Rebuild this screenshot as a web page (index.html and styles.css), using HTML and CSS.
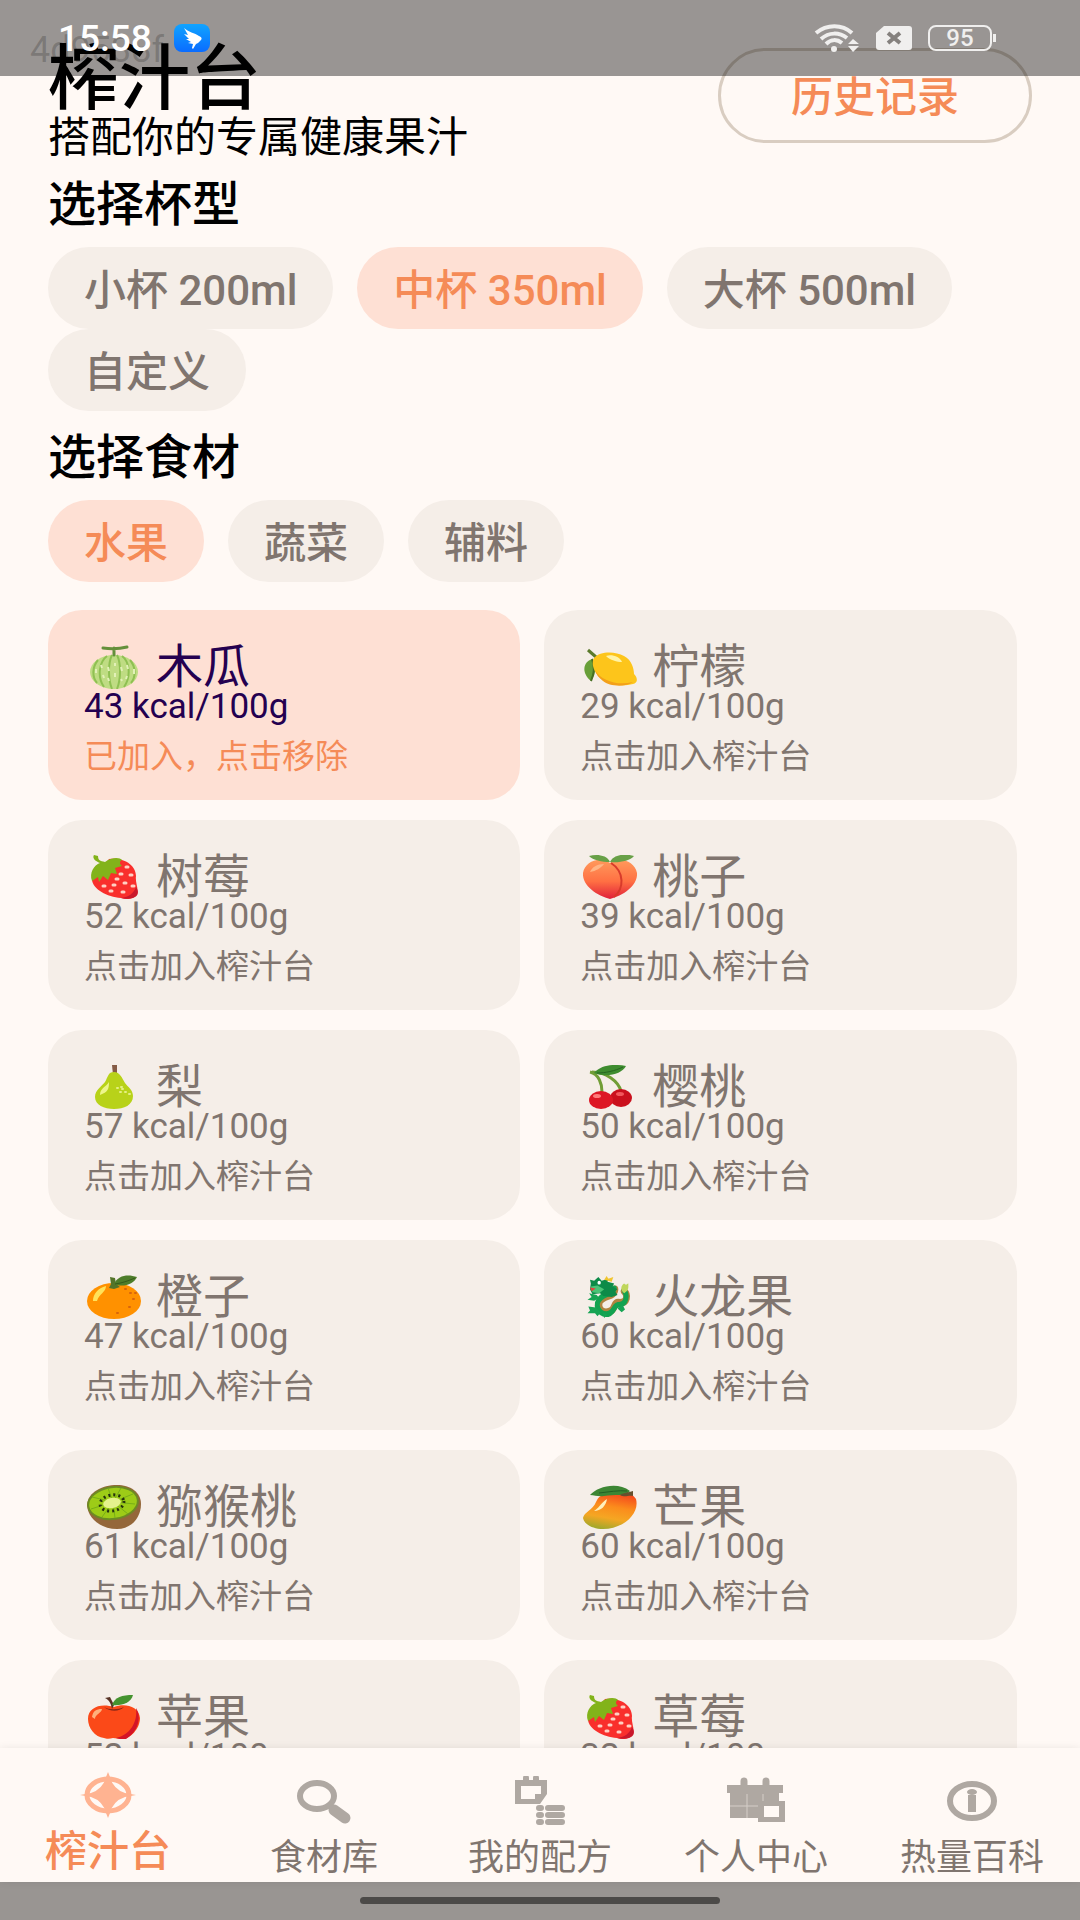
FILE: index.html
```html
<!DOCTYPE html>
<html lang="zh-CN">
<head>
  <meta charset="UTF-8" />
  <title>榨汁台</title>
  <meta name="viewport" content="width=device-width, initial-scale=1.0" />
  <link rel="stylesheet" href="styles.css">
</head>
<body>
  <!-- 水果图标 -->
  <svg class="sprite" aria-hidden="true">
    <defs>
      <linearGradient id="peachFill" x1="0" y1="0" x2="0" y2="1">
        <stop offset="0" stop-color="#ff9a5c" />
        <stop offset="0.55" stop-color="#ff7043" />
        <stop offset="1" stop-color="#e0203a" />
      </linearGradient>
      <linearGradient id="mangoFill" x1="0.6" y1="0" x2="0.35" y2="1">
        <stop offset="0" stop-color="#f4401c" />
        <stop offset="0.4" stop-color="#fb8c1c" />
        <stop offset="0.7" stop-color="#f5a623" />
        <stop offset="1" stop-color="#a0a82c" />
      </linearGradient>
      <linearGradient id="dingFill" x1="0" y1="0" x2="0" y2="1">
        <stop offset="0" stop-color="#10a4ff" />
        <stop offset="1" stop-color="#0a6cff" />
      </linearGradient>
      <symbol id="melon" viewBox="0 0 60 44">
        <ellipse cx="30" cy="27" rx="24" ry="17" fill="#bfdc83" />
        <path d="M23 11C15 17 13 32 20 42M28 10C24 18 24 34 28 44M33 10c4 8 4 24 0 34M38 11c8 6 9 21 2 31M14 15C8 22 8 32 13 38M46 15c6 7 6 17 1 23" fill="none" stroke="#8fc052" stroke-width="2" />
        <path d="M17 20l1 3M19 30l1 3M24 22l1 4M24 33l1 3M31 18v3M31 28v4M37 22l1 4M37 34l1 2M43 20l1 4M43 31l-1 3M12 24v4M50 24v5" stroke="#e2f0b8" stroke-width="2" />
        <path d="M19 3c7 1 16 1 24-1M30 3v7" fill="none" stroke="#64903b" stroke-width="3" stroke-linecap="round" />
      </symbol>
      <symbol id="lemon" viewBox="0 0 60 44">
        <path d="M12 14C3 17 1 28 11 36C17 28 16 20 12 14Z" fill="#689f38" />
        <path d="M12 14c3 7 2 15-1 22" fill="none" stroke="#476f25" stroke-width="2" />
        <path d="M8 5l8 7" stroke="#5b7a2c" stroke-width="3" />
        <path d="M14 13C20 6 35 6 44 11C52 15 54 24 54 29C58 33 58 38 53 39C45 41 34 41 26 37C16 32 10 20 14 13Z" fill="#fdc51b" />
        <path d="M15 25c6 11 23 16 38 12c-9 6-24 4-30-1c-4-3-7-7-8-11z" fill="#f3a01a" />
        <path d="M26 11c6-2 14 1 16 6c-5 0-12-2-16-6z" fill="#fff3a6" />
      </symbol>
      <symbol id="strawberry" viewBox="0 0 60 44">
        <path d="M25 4C41 2 52 11 52 21C51 28 55 34 53 39C51 44 43 45 37 43C23 42 9 34 8 25Z" fill="#f92f2c" />
        <path d="M52 32c3 4 3 9-3 11c-4 1-9 1-12 0c8-1 13-5 15-11z" fill="#c9182b" />
        <path d="M8 26C5 18 10 10 16 8C11 6 8 3 10 0l4 1c0 4 2 5 7 6C27 2 36 2 38 5c-4 2-1 5 0 6l-7 2l2 6l-6-1l-3 7l-5-4l-4 6l-1-5z" fill="#82b31a" />
        <path d="M36 19h2M46 20h2M40 28h2M48 31h2M29 30h2M38 37h2M26 36h2M19 31h2M32 24h2M42 12h2" stroke="#ffd0c3" stroke-width="3" stroke-linecap="round" />
      </symbol>
      <symbol id="peach" viewBox="0 0 60 44">
        <path d="M30 8C39 1 55 6 57 18C58 31 42 41 30 44C18 41 2 31 3 18C5 6 20 1 30 8Z" fill="url(#peachFill)" />
        <path d="M31 8c14 9 13 26 3 34" fill="none" stroke="#d83b2b" stroke-width="2" />
        <path d="M30 7C22 7 13 5 9 1c8-2 18-1 21 6zM30 7c3-7 14-9 24-6c-4 5-15 7-24 6z" fill="#68a047" />
        <path d="M10 17c2-5 7-8 14-8c-3 4-8 7-14 8z" fill="#ffb585" />
      </symbol>
      <symbol id="pear" viewBox="0 0 60 44">
        <path d="M28 0h5v10h-4z" fill="#855b45" />
        <path d="M30 7C36 7 38 13 41 18C44 22 49 25 49 31C49 40 40 44 30 44C20 44 11 40 11 32C11 25 18 21 21 17C24 12 24 7 30 7Z" fill="#b8d219" />
        <path d="M16 30c0-7 6-8 9-13c0 7-1 10-9 13z" fill="#edf58c" />
        <path d="M33 23h1M37 22h1M36 27h1M41 27h1M38 24h1M45 29h1" stroke="#e6ef83" stroke-width="2" stroke-linecap="round" />
      </symbol>
      <symbol id="cherry" viewBox="0 0 60 44">
        <path d="M10 7c9 2 12 12 12 20M12 7c14 0 26 9 29 19" fill="none" stroke="#719d36" stroke-width="3" />
        <path d="M14 8C22-1 35-1 46 1C42 9 27 13 14 8Z" fill="#3e8c2f" />
        <path d="M17 8c8 0 18-2 26-6" fill="none" stroke="#276621" stroke-width="1" />
        <ellipse cx="41" cy="33" rx="11" ry="9" fill="#ca101d" />
        <ellipse cx="21" cy="35" rx="12" ry="9" fill="#dd1725" />
        <ellipse cx="17" cy="31" rx="4" ry="2" fill="#ff7b7b" />
        <ellipse cx="40" cy="29" rx="4" ry="2" fill="#f1575c" />
      </symbol>
      <symbol id="orange" viewBox="0 0 60 44">
        <ellipse cx="30" cy="26" rx="27" ry="18" fill="#ff9100" />
        <path d="M26 2l5 1l1 6l4 3l-6 2l-5-1l2-4z" fill="#54742a" />
        <path d="M30 9C34 0 44-1 53 2C50 9 39 13 30 9Z" fill="#4e7d2a" />
        <path d="M31 9c7-1 13-3 20-6" fill="none" stroke="#365a1b" stroke-width="1" />
        <path d="M9 26c0-7 5-13 13-15c0 6-7 8-9 15z" fill="#ffe25a" />
        <path d="M41 14h1M46 18h1M49 24h1M45 32h1M33 38h1M51 18h1" stroke="#d8650b" stroke-width="2" stroke-linecap="round" />
      </symbol>
      <symbol id="dragon" viewBox="-2 -1 72 46" preserveAspectRatio="none">
        <path d="M40 14C40 22 24 20 21 28C19 36 27 40 34 37C42 34 37 26 46 28C55 28 56 20 51 16" fill="none" stroke="#b0843f" stroke-width="8" stroke-linecap="round" />
        <path d="M39 13C38 20 22 18 19 28C17 37 27 42 34 39C41 35 38 30 46 30C54 29 55 20 51 15" fill="none" stroke="#12a250" stroke-width="6" stroke-linecap="round" />
        <path d="M11 8L10 4l5 1l5-4l4 4l8-2l-1 3l8 2l-2 3l6 3l-3 2l3 4l-7 2l-10-1l-4-3l-9 1l-3-5z" fill="#0d8b48" />
        <path d="M11 11l8-1l8 4l-6 4l-8-1z" fill="#4ac476" />
        <path d="M27 4l3-4l2 3l6-2l-2 5z" fill="#f1c52f" />
        <path d="M10 12l7 1l-5 3z" fill="#e2453c" />
        <circle cx="21" cy="7" r="2" fill="#fff" />
        <path d="M18 20L9 18l3 4l-5 3l8 1l6-3zM17 33l-9-1l2 4l-3 3l9 0l3 3l4-4zM43 34l5 4l4-3l-3-5zM25 38l2 6l4-4z" fill="#17a454" />
        <path d="M51 18c-5-3-4-8 0-10c3 3 4-1 5 0c0 4 1 7-5 10z" fill="#bfd65b" />
      </symbol>
      <symbol id="kiwi" viewBox="0 0 60 44">
        <path d="M3 20C4 7 18 0 33 0C46 0 57 7 57 19C57 33 47 44 33 44C17 44 4 34 3 20Z" fill="#94673a" />
        <ellipse cx="29" cy="18" rx="25" ry="16" transform="rotate(-8 29 18)" fill="#9dcc17" stroke="#6d8a24" stroke-width="2" />
        <path d="M29 17L8 12M29 17L7 24M29 17L18 32M29 17L31 33M29 17L44 29M29 17L51 19M29 17L49 9M29 17L37 3M29 17L24 3" stroke="#78af16" stroke-width="1" />
        <ellipse cx="28" cy="18" rx="12" ry="8" transform="rotate(-10 28 18)" fill="none" stroke="#25320e" stroke-width="3" stroke-dasharray="2 3" />
        <ellipse cx="28" cy="18" rx="9" ry="5" transform="rotate(-12 28 18)" fill="#e4f28c" />
      </symbol>
      <symbol id="mango" viewBox="0 0 60 44">
        <path d="M22 10C34 3 51 6 56 14C60 29 43 44 23 44C12 44 4 39 3 33C4 27 13 25 16 17C18 13 19 12 22 10Z" fill="url(#mangoFill)" />
        <path d="M10 10C17 2 37-4 50 6C46 12 34 9 24 11C18 12 15 10 10 10Z" fill="#3d8634" />
        <path d="M19 8c9-1 20-3 28-2" fill="none" stroke="#246024" stroke-width="1" />
        <path d="M40 10c5-3 8-2 13-4v5c-5-1-8 2-13-1z" fill="#66502e" />
        <path d="M14 26c4-2 7-8 13-12c-1 7-6 12-13 12z" fill="#fff0bc" />
      </symbol>
      <symbol id="apple" viewBox="0 0 60 44">
        <path d="M30 12C39 8 55 10 56 23C56 34 46 44 38 44C34 44 32 43 29 43C26 44 22 44 20 43C11 42 4 33 4 24C4 12 17 8 30 12Z" fill="#fb4918" />
        <path d="M52 13c6 9 2 24-10 31c-5 0-8 0-10-1c14-3 22-16 20-30z" fill="#d41427" />
        <path d="M21 3l5-1l4 8l-2 4c-1-6-3-9-7-11z" fill="#583325" />
        <path d="M28 10C31 2 38 0 49 0C47 8 38 11 28 10Z" fill="#45932f" />
        <path d="M20 12c5 3 14 3 20 0c-5 5-14 5-20 0z" fill="#8c2817" />
        <path d="M8 22c1-6 4-8 10-8c0 4-7 5-7 10z" fill="#ffb07c" />
      </symbol>
    </defs>
  </svg>

  <div class="app">
    <header class="status-bar">
      <span class="device-id">4d9538f</span>
      <span class="clock">15:58</span>
      <svg class="ding" viewBox="0 0 36 28" aria-hidden="true">
        <rect width="36" height="28" rx="8" fill="url(#dingFill)" />
        <path d="M10 4C14 8 21 9 25 12C28 13 28 15 27 16L24 19L22 20L19 25L18 24L19 20L14 19L17 18L12 15L15 15L10 10L14 11Z" fill="#fff" />
      </svg>
      <div class="status-icons">
        <svg class="wifi" viewBox="0 0 46 28" aria-hidden="true">
          <path d="M2 9C13 0 28 0 38 9M7 15C15 8 25 8 33 14M12 20C17 15 23 15 28 19" fill="none" stroke="#f0efee" stroke-width="4" />
          <circle cx="20" cy="25" r="3" fill="#f0efee" />
          <path d="M34 20l5-5l6 5zM34 22h11l-6 6z" fill="#f0efee" />
        </svg>
        <svg class="sim" viewBox="0 0 36 24" aria-hidden="true">
          <path d="M8 0H33Q36 0 36 3V21Q36 24 33 24H3Q0 24 0 21V7Z" fill="#f0efee" />
          <path d="M12 7l12 10M24 7L12 17" stroke="#85817e" stroke-width="4" />
        </svg>
        <span class="battery">95</span>
      </div>
    </header>

    <main class="page">
      <div class="page-head">
        <div>
          <h1>榨汁台</h1>
          <p class="subtitle">搭配你的专属健康果汁</p>
        </div>
        <button class="history-btn" type="button">历史记录</button>
      </div>

      <h2>选择杯型</h2>
      <div class="chips">
        <button class="chip" type="button">小杯 200ml</button>
        <button class="chip active" type="button">中杯 350ml</button>
        <button class="chip" type="button">大杯 500ml</button>
        <button class="chip" type="button">自定义</button>
      </div>

      <h2>选择食材</h2>
      <div class="chips">
        <button class="chip active" type="button">水果</button>
        <button class="chip" type="button">蔬菜</button>
        <button class="chip" type="button">辅料</button>
      </div>

      <div class="cards">
        <button class="card active" type="button">
          <span class="name"><svg class="fruit" aria-hidden="true"><use href="#melon" /></svg>木瓜</span>
          <span class="kcal">43 kcal/100g</span>
          <span class="hint">已加入，点击移除</span>
        </button>
        <button class="card" type="button">
          <span class="name"><svg class="fruit" aria-hidden="true"><use href="#lemon" /></svg>柠檬</span>
          <span class="kcal">29 kcal/100g</span>
          <span class="hint">点击加入榨汁台</span>
        </button>
        <button class="card" type="button">
          <span class="name"><svg class="fruit" aria-hidden="true"><use href="#strawberry" /></svg>树莓</span>
          <span class="kcal">52 kcal/100g</span>
          <span class="hint">点击加入榨汁台</span>
        </button>
        <button class="card" type="button">
          <span class="name"><svg class="fruit" aria-hidden="true"><use href="#peach" /></svg>桃子</span>
          <span class="kcal">39 kcal/100g</span>
          <span class="hint">点击加入榨汁台</span>
        </button>
        <button class="card" type="button">
          <span class="name"><svg class="fruit" aria-hidden="true"><use href="#pear" /></svg>梨</span>
          <span class="kcal">57 kcal/100g</span>
          <span class="hint">点击加入榨汁台</span>
        </button>
        <button class="card" type="button">
          <span class="name"><svg class="fruit" aria-hidden="true"><use href="#cherry" /></svg>樱桃</span>
          <span class="kcal">50 kcal/100g</span>
          <span class="hint">点击加入榨汁台</span>
        </button>
        <button class="card" type="button">
          <span class="name"><svg class="fruit" aria-hidden="true"><use href="#orange" /></svg>橙子</span>
          <span class="kcal">47 kcal/100g</span>
          <span class="hint">点击加入榨汁台</span>
        </button>
        <button class="card" type="button">
          <span class="name"><svg class="fruit" aria-hidden="true"><use href="#dragon" /></svg>火龙果</span>
          <span class="kcal">60 kcal/100g</span>
          <span class="hint">点击加入榨汁台</span>
        </button>
        <button class="card" type="button">
          <span class="name"><svg class="fruit" aria-hidden="true"><use href="#kiwi" /></svg>猕猴桃</span>
          <span class="kcal">61 kcal/100g</span>
          <span class="hint">点击加入榨汁台</span>
        </button>
        <button class="card" type="button">
          <span class="name"><svg class="fruit" aria-hidden="true"><use href="#mango" /></svg>芒果</span>
          <span class="kcal">60 kcal/100g</span>
          <span class="hint">点击加入榨汁台</span>
        </button>
        <button class="card" type="button">
          <span class="name"><svg class="fruit" aria-hidden="true"><use href="#apple" /></svg>苹果</span>
          <span class="kcal">52 kcal/100g</span>
          <span class="hint">点击加入榨汁台</span>
        </button>
        <button class="card" type="button">
          <span class="name"><svg class="fruit" aria-hidden="true"><use href="#strawberry" /></svg>草莓</span>
          <span class="kcal">32 kcal/100g</span>
          <span class="hint">点击加入榨汁台</span>
        </button>
      </div>
    </main>

    <nav class="tab-bar">
      <a class="tab active" href="#juice">
        <svg viewBox="0 0 60 50" aria-hidden="true">
          <ellipse cx="30" cy="25" rx="21" ry="16" fill="none" stroke="currentColor" stroke-width="5" />
          <path d="M30 2L32 7Q35 19 47 23L58 25L47 27Q35 31 32 43L30 48L28 43Q25 31 13 27L2 25L13 23Q25 19 28 7Z" fill="currentColor" />
        </svg>
        榨汁台
      </a>
      <a class="tab" href="#foods">
        <svg viewBox="0 0 60 50" aria-hidden="true">
          <ellipse cx="23" cy="20" rx="17" ry="13" fill="none" stroke="currentColor" stroke-width="6" />
          <path d="M34 29l4 4" stroke="currentColor" stroke-width="5" />
          <path d="M40 34l11 8" stroke="currentColor" stroke-width="11" stroke-linecap="round" />
        </svg>
        食材库
      </a>
      <a class="tab" href="#recipes">
        <svg viewBox="0 0 60 50" aria-hidden="true">
          <path d="M5 4H37V18L30 28H5ZM11 10V23H25V18H31V10Z" fill="currentColor" fill-rule="evenodd" />
          <path d="M16 2v4M26 2v4" stroke="currentColor" stroke-width="6" stroke-linecap="round" />
          <path d="M29 32h2M29 39h2M29 46h2" stroke="currentColor" stroke-width="6" stroke-linecap="round" />
          <path d="M38 32h14M38 39h14M38 46h14" stroke="currentColor" stroke-width="6" stroke-linecap="round" />
        </svg>
        我的配方
      </a>
      <a class="tab" href="#profile">
        <svg viewBox="0 0 60 50" aria-hidden="true">
          <path d="M18 5v4M40 5v4" stroke="currentColor" stroke-width="7" stroke-linecap="round" />
          <path d="M1 9H57V17H53V25H59V46H32V42H4V17H1ZM38 30V41H53V30Z" fill="currentColor" fill-rule="evenodd" />
          <path d="M4 30H32M21 18V42M37 18V25" stroke="#d5cec8" stroke-width="1" />
        </svg>
        个人中心
      </a>
      <a class="tab" href="#wiki">
        <svg viewBox="0 0 60 50" aria-hidden="true">
          <ellipse cx="30" cy="25" rx="22" ry="17" fill="none" stroke="currentColor" stroke-width="6" />
          <path d="M26 19h8v17h-8z" fill="currentColor" />
          <ellipse cx="30" cy="16" rx="5" ry="3" fill="currentColor" />
        </svg>
        热量百科
      </a>
    </nav>
    <div class="home-bar"><span class="home-pill"></span></div>
  </div>
</body>
</html>
```
FILE: styles.css
```css
* {
  box-sizing: border-box;
}

body {
  margin: 0;
  background-color: #fff9f5;
  color: #000;
  font-family: Roboto, "Noto Sans CJK SC", sans-serif;
}

h1,
h2,
p {
  margin: 0;
}

button {
  border: none;
  background: none;
  font-family: inherit;
  cursor: pointer;
}

.sprite {
  position: absolute;
  width: 0;
  height: 0;
}

.app {
  position: relative;
  display: flex;
  flex-direction: column;
  height: 100vh;
  overflow: hidden;
}

/* 状态栏，半透明盖在页面上 */
.status-bar {
  position: absolute;
  top: 0;
  left: 0;
  right: 0;
  z-index: 2;
  display: flex;
  align-items: center;
  gap: 22px;
  height: 76px;
  padding: 0 88px 0 58px;
  background-color: rgba(0, 0, 0, 0.4);
  color: #fff;
}

.device-id {
  position: absolute;
  left: 30px;
  top: 30px;
  font-size: 36px;
  line-height: 40px;
  color: rgba(0, 0, 0, 0.2);
}

.clock {
  position: relative;
  font-size: 37px;
  font-weight: 500;
}

.ding {
  position: relative;
  width: 36px;
  height: 28px;
}

.status-icons {
  display: flex;
  align-items: center;
  gap: 16px;
  margin-left: auto;
}

.wifi {
  width: 46px;
  height: 28px;
}

.sim {
  width: 36px;
  height: 24px;
}

.battery {
  position: relative;
  width: 64px;
  height: 26px;
  border: 2px solid #f0efee;
  border-radius: 8px;
  font-size: 24px;
  font-weight: 500;
  line-height: 22px;
  text-align: center;
  color: #f0efee;
}

.battery::after {
  content: "";
  position: absolute;
  right: -6px;
  top: 7px;
  width: 3px;
  height: 8px;
  background-color: #f0efee;
}

.page {
  flex: 1;
  min-height: 0;
  padding: 40px 48px;
  overflow: hidden;
}

.page-head {
  display: flex;
  justify-content: space-between;
  align-items: flex-start;
}

h1 {
  font-size: 71px;
  font-weight: 500;
  line-height: 78px;
}

.subtitle {
  font-size: 42px;
  line-height: 40px;
}

.history-btn {
  margin-top: 8px;
  padding: 0 70px 4px;
  height: 95px;
  border: 3px solid #d9cdc1;
  border-radius: 48px;
  font-size: 42px;
  font-weight: 500;
  color: #f58b57;
}

h2 {
  padding: 19px 0 14px;
  font-size: 48px;
  font-weight: 500;
  line-height: 56px;
}

.chips {
  display: flex;
  flex-wrap: wrap;
  column-gap: 24px;
}

.chip {
  height: 82px;
  padding: 0 36px 4px;
  border-radius: 41px;
  background-color: #f5eee8;
  font-size: 42px;
  font-weight: 500;
  color: #80756f;
}

.chip.active {
  background-color: #fee0d4;
  color: #f58b57;
}

.cards {
  display: flex;
  flex-wrap: wrap;
  gap: 20px 24px;
  margin-top: 28px;
}

.card {
  display: flex;
  flex-direction: column;
  width: 48%;
  height: 190px;
  padding: 35px 36px 20px;
  border-radius: 34px;
  background-color: #f5eee8;
  text-align: left;
  color: #80756f;
}

.name {
  display: flex;
  align-items: center;
  gap: 12px;
  font-size: 47px;
  line-height: 44px;
}

.fruit {
  width: 60px;
  height: 44px;
}

.kcal {
  font-size: 35px;
  line-height: 36px;
}

.hint {
  margin-top: 10px;
  font-size: 33px;
  line-height: 44px;
}

.card.active {
  background-color: #fee0d4;
  color: #240050;
}

.card.active .hint {
  color: #f58b57;
}

/* 底部导航 */
.tab-bar {
  position: relative;
  display: flex;
  height: 134px;
  background-color: #fff9f5;
  box-shadow: 0 0 8px rgba(0, 0, 0, 0.08);
}

.tab {
  flex: 1;
  display: flex;
  flex-direction: column;
  align-items: center;
  justify-content: flex-end;
  gap: 8px;
  font-size: 36px;
  line-height: 48px;
  text-decoration: none;
  color: #80756f;
}

.tab svg {
  width: 60px;
  height: 50px;
  color: #afa8a2;
}

.tab.active {
  padding-bottom: 6px;
  font-size: 42px;
  font-weight: 500;
  color: #f58b57;
}

.tab.active svg {
  color: #ffb391;
}

.home-bar {
  display: flex;
  align-items: center;
  justify-content: center;
  height: 38px;
  padding-bottom: 2px;
  background-color: #999592;
}

.home-pill {
  width: calc(100% / 3);
  height: 7px;
  border-radius: 4px;
  background-color: #4c4a48;
}
```
